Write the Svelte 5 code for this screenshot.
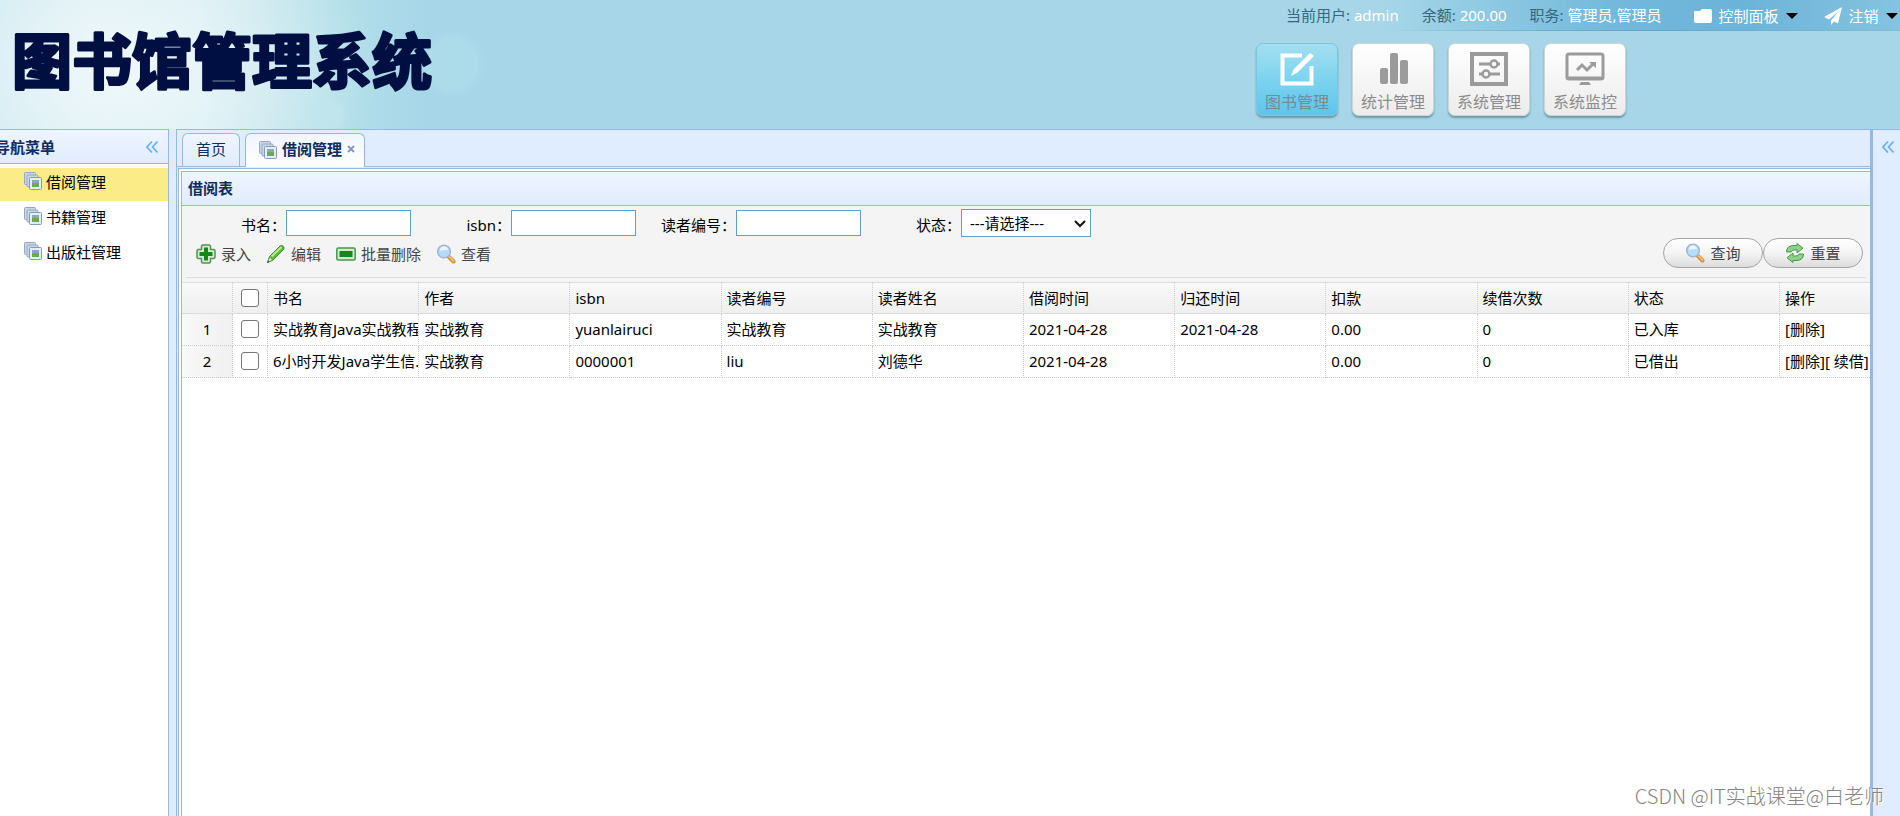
<script>
  const modules = [
    { label: '图书管理', icon: 'edit', active: true },
    { label: '统计管理', icon: 'bars' },
    { label: '系统管理', icon: 'sliders' },
    { label: '系统监控', icon: 'monitor' }
  ];
  const menu = ['借阅管理', '书籍管理', '出版社管理'];
  const actions = [
    { label: '录入', icon: 'add' },
    { label: '编辑', icon: 'pencil' },
    { label: '批量删除', icon: 'remove' },
    { label: '查看', icon: 'search' }
  ];
  const columns = ['书名', '作者', 'isbn', '读者编号', '读者姓名', '借阅时间', '归还时间', '扣款', '续借次数', '状态', '操作'];
  const rows = [
    ['实战教育Java实战教程', '实战教育', 'yuanlairuci', '实战教育', '实战教育', '2021-04-28', '2021-04-28', '0.00', '0', '已入库'],
    ['6小时开发Java学生信..', '实战教育', '0000001', 'liu', '刘德华', '2021-04-28', '', '0.00', '0', '已借出']
  ];
  const operations = [['[删除]'], ['[删除]', '[ 续借]']];
</script>

{#snippet pages()}
  <svg class="pages" viewBox="0 0 18 18" width="18" height="18" aria-hidden="true">
    <rect x="0.5" y="0.5" width="11" height="12" rx="1" fill="#c9d7e4" stroke="#93a9c0" />
    <rect x="3" y="3" width="11" height="12" rx="1" fill="#c9d7e4" stroke="#93a9c0" />
    <rect x="5.500" y="5.500" width="12" height="12" rx="1" fill="#e6eef5" stroke="#839bb4" />
    <rect x="8" y="8" width="7" height="7" fill="#6cab45" />
    <path d="M8 8h7v3H8z" fill="#87a9b8" />
  </svg>
{/snippet}

{#snippet glyph(name)}
  <svg viewBox="0 0 20 20" width="20" height="20" aria-hidden="true">
    {#if name === 'add'}
      <path d="M6.500 1h7l1 1v3.500H18l1 1v7l-1 1h-3.500V18l-1 1h-7l-1-1v-3.500H2l-1-1v-7l1-1h3.500V2z" fill="#d3ecd0" stroke="#4f9455" stroke-width="1.500" stroke-linejoin="round" />
      <path d="M8 3.500h4V8h4.500v4H12v4.500H8V12H3.500V8H8z" fill="#128a18" />
    {:else if name === 'pencil'}
      <path d="M1.500 18.500l2-6L14 2q1.800-1.200 3.200.2t.6 3L7.200 16z" fill="#5fb83c" stroke="#3c8d2c" />
      <path d="M5.500 12.500L15.500 3" stroke="#b6eb94" stroke-width="2" />
      <path d="M1.500 18.500l2-5.500 3.200 3z" fill="#d9e6c8" stroke="#669452" stroke-width=".8" />
      <path d="M1 19l1-2.500 1.500 1.500z" fill="#2c6322" />
    {:else if name === 'remove'}
      <rect x=".8" y="4" width="18.400" height="12" rx="1.500" fill="#d0ecd0" stroke="#4c9350" stroke-width="1.500" />
      <rect x="3.500" y="7" width="13" height="6" fill="#0d8a1c" />
    {:else if name === 'search'}
      <path d="M12.500 12.500l5 5" stroke="#d38b36" stroke-width="4" stroke-linecap="round" />
      <path d="M12.500 12l5 5" stroke="#f4bd6f" stroke-width="2" stroke-linecap="round" />
      <circle cx="8" cy="7.500" r="6.300" fill="#b7dcfb" stroke="#a3b6cf" stroke-width="1.600" />
      <path d="M4 7a4 4 0 0 1 8-1q-4-.5-8 1" fill="#e8f6ff" />
    {:else}
      <path d="M1.500 9q0-6.500 7.500-6.500h3V.5L18 5.200 12 10V7H9.500Q6.500 7 6 9z" fill="#8dd08a" stroke="#449a4a" />
      <path d="M18.500 11q0 6.500-7.500 6.500H8v2l-6-4.700L8 10v3h2.500q3 0 3.500-2z" fill="#8dd08a" stroke="#449a4a" />
    {/if}
  </svg>
{/snippet}

{#snippet chevrons()}
  <svg viewBox="0 0 12 12" width="12" height="12" aria-hidden="true">
    <path d="M6 .5L1 6l5 5.500M11.500 .5l-5 5.500 5 5.500" fill="none" stroke="#6bb1ee" stroke-width="1.700" />
  </svg>
{/snippet}

<div class="page">
  <header>
    <h1>
      <svg width="440" height="110" viewBox="0 0 440 110">
        <text x="12" y="84">图书馆管理系统</text>
      </svg>
    </h1>
    <div class="right">
      <div class="userbar">
        <span class="info">当前用户: <b>admin</b></span>
        <span class="info">余额: <b>200.00</b></span>
        <span class="info">职务: <b>管理员,管理员</b></span>
        <button class="link">
          <svg viewBox="0 0 18 16" width="18" height="16" aria-hidden="true"><path d="M0 4q0-1 1-1h5l2-2h8q2 0 2 2v10q0 2-2 2H2q-2 0-2-2z" fill="#fff" /></svg>
          控制面板
          <i class="caret"></i>
        </button>
        <button class="link">
          <svg viewBox="0 0 18 18" width="18" height="18" aria-hidden="true"><path d="M18 0L0 10l5 2.500L15 4 7 13.500V18l3-3.500 4 2z" fill="#fff" /></svg>
          注销
          <i class="caret"></i>
        </button>
      </div>
      <nav class="modules">
        {#each modules as m}
          <button class="module" class:active={m.active}>
            <svg viewBox="0 0 40 36" width="40" height="36" aria-hidden="true">
              {#if m.icon === 'edit'}
                <path d="M25 3.500H5.500v28h29V14" fill="none" stroke="#fff" stroke-width="4" />
                <path d="M14 24l2.500-6.500L33 1l4 3-16.500 16.500z" fill="#fff" />
              {:else if m.icon === 'bars'}
                <g fill="#9b9b9b"><rect x="7" y="16" width="8" height="16" rx="2" /><rect x="17" y="1" width="8" height="31" rx="2" /><rect x="27" y="8" width="8" height="24" rx="2" /></g>
              {:else if m.icon === 'sliders'}
                <g fill="none" stroke="#9b9b9b"><rect x="3" y="2" width="34" height="30" stroke-width="4" /><path d="M10 12h12M28 12h3M10 22h3M20 22h11" stroke-width="3" /><circle cx="25" cy="12" r="3.500" stroke-width="2.500" /><circle cx="17" cy="22" r="3.500" stroke-width="2.500" /></g>
              {:else}
                <rect x="2" y="2" width="36" height="25" rx="2" fill="none" stroke="#9b9b9b" stroke-width="3" />
                <path d="M2 26h36M12 18l5-5 5 5 6-6" fill="none" stroke="#9b9b9b" stroke-width="3" />
                <path d="M24 10h7v6zM16 30h8l2 3H14z" fill="#9b9b9b" />
              {/if}
            </svg>
            {m.label}
          </button>
        {/each}
      </nav>
    </div>
  </header>

  <div class="body">
    <aside>
      <div class="head">
        <span>导航菜单</span>
        <button class="plain" aria-label="收起菜单">{@render chevrons()}</button>
      </div>
      <ul>
        {#each menu as item, i}
          <li class:selected={i === 0}><a href="#{i}">{@render pages()}{item}</a></li>
        {/each}
      </ul>
    </aside>

    <main>
      <div class="tabs">
        <button class="tab">首页</button>
        <div class="tab on">
          {@render pages()}
          <span>借阅管理</span>
          <button class="plain" aria-label="关闭">
            <svg viewBox="0 0 8 8" width="8" height="8" aria-hidden="true"><path d="M1 1l6 6M7 1L1 7" stroke="#8597bd" stroke-width="1.800" /></svg>
          </button>
        </div>
      </div>
      <div class="frame">
        <section>
          <h2>借阅表</h2>
          <div class="tools">
            <form class="filters" onsubmit={(e) => e.preventDefault()}>
              <label for="f-name">书名：</label><input id="f-name" />
              <label for="f-isbn">isbn：</label><input id="f-isbn" />
              <label for="f-reader">读者编号：</label><input id="f-reader" />
              <label for="f-state">状态：</label>
              <div class="select">
                <select id="f-state"><option>---请选择---</option></select>
                <svg viewBox="0 0 12 8" width="12" height="8" aria-hidden="true"><path d="M1 1l5 5 5-5" fill="none" stroke="#111" stroke-width="2" /></svg>
              </div>
            </form>
            <div class="actions">
              {#each actions as a}
                <button class="plain">{@render glyph(a.icon)}{a.label}</button>
              {/each}
              <div class="pills">
                <button class="pill">{@render glyph('search')}查询</button>
                <button class="pill">{@render glyph('refresh')}重置</button>
              </div>
            </div>
          </div>
          <table>
            <colgroup>
              <col class="c-num" /><col class="c-check" />
              {#each columns as c, i}<col class:c-last={i === columns.length - 1} />{/each}
            </colgroup>
            <thead>
              <tr>
                <th class="num"></th>
                <th class="check"><input type="checkbox" aria-label="全选" /></th>
                {#each columns as c}<th>{c}</th>{/each}
              </tr>
            </thead>
            <tbody>
              {#each rows as row, r}
                <tr>
                  <td class="num">{r + 1}</td>
                  <td class="check"><input type="checkbox" aria-label="选择第{r + 1}行" /></td>
                  {#each row as cell}<td>{cell}</td>{/each}
                  <td>{#each operations[r] as op}<a href="#op">{op}</a>{/each}</td>
                </tr>
              {/each}
            </tbody>
          </table>
        </section>
      </div>
    </main>

    <div class="east">
      <button class="plain" aria-label="展开面板">{@render chevrons()}</button>
    </div>
  </div>
  <div class="watermark">CSDN @IT实战课堂@白老师</div>
</div>

<style>
  :global(body) { margin: 0; }
  .page, .page * { box-sizing: border-box; }
  .page {
    position: relative;
    display: flex;
    flex-direction: column;
    min-height: 100vh;
    overflow: hidden;
    font: 15px/20px "Noto Sans", "Noto Sans CJK SC", sans-serif;
    color: #000;
    background: #e0ecff;
  }
  button, input, select { font: inherit; color: inherit; margin: 0; }
  button { cursor: pointer; }
  a { color: inherit; text-decoration: none; }
  .plain { display: flex; align-items: center; padding: 0; border: 0; background: none; }

  header {
    display: flex;
    justify-content: space-between;
    height: 129px;
    background:
      radial-gradient(circle 34px at 452px 64px, #b0dfeb99 0 75%, transparent),
      radial-gradient(circle 20px at 328px 116px, #c2e6ee99 0 75%, transparent),
      radial-gradient(ellipse 260px 170px at 120px 70px, #eef8fa 0, #eef8fa66 50%, transparent),
      linear-gradient(90deg, #cfe9f2 0, #deeff5 90px, #d9eef4 200px, #c3e5ec 280px, #b3dfe9 340px, #a6d6e8 430px);
  }
  h1 { margin: 0; height: 110px; }
  h1 text {
    font: 700 60px "Noto Sans CJK SC", sans-serif;
    fill: #000f42;
    stroke: #000f42;
    stroke-width: 3px;
    stroke-linejoin: round;
  }
  .right { width: 644px; flex: none; }
  .userbar {
    display: flex;
    align-items: center;
    height: 31px;
    padding-left: 30px;
    white-space: nowrap;
    color: #35687f;
    background: linear-gradient(90deg, transparent 20%, #74b9dc 55%, #6cb3d9 75%, #85c3df);
    border-bottom: 1px solid transparent;
    border-image: linear-gradient(90deg, transparent 20%, #62a5c8 60%, #80bcd6) 1;
  }
  .info { margin-right: 23px; padding-bottom: 1px; }
  .info b { font-weight: 400; color: #fff; }
  .link { display: flex; align-items: center; gap: 7px; margin: 2px 18px 0 9px; padding: 0; border: 0; background: none; color: #fff; }
  .link + .link { margin: 2px 0 0 8px; }
  .caret { border: 6px solid transparent; border-top-color: #000; border-bottom: 0; }
  .modules { display: flex; gap: 14px; padding-top: 12px; }
  .module {
    display: flex;
    flex-direction: column;
    align-items: center;
    gap: 4px;
    width: 82px;
    height: 73px;
    padding: 8px 0 0;
    border: 1px solid #cdd5d8;
    border-radius: 7px;
    background: linear-gradient(#fff, #ececec);
    box-shadow: 0 2px 2px #6f96a5;
    font-size: 16px;
    color: #8b8b8b;
  }
  .module.active { background: linear-gradient(#a3dff0, #7dd3ef 50%, #5fc4ea); border-color: #7ac6df; color: #718d98; }

  .body { display: flex; flex: 1; }
  aside { width: 169px; flex: none; border: 1px solid #95b8e7; border-width: 1px 1px 0 0; background: #fff; }
  .head {
    display: flex;
    align-items: center;
    justify-content: space-between;
    height: 34px;
    padding-right: 10px;
    border-bottom: 1px solid #95b8e7;
    background: linear-gradient(#eff5ff, #e0ecff);
    font-weight: 700;
    color: #0e2d5f;
  }
  .head span { margin-left: -5px; }
  ul { list-style: none; margin: 0; padding: 4px 0 0; }
  li { height: 33px; margin-bottom: 2px; }
  li.selected { background: #fbec88; }
  li a { display: flex; align-items: center; gap: 4px; height: 28px; padding-left: 24px; }
  .pages { flex: none; margin-bottom: 2px; }

  main { display: flex; flex-direction: column; flex: 1; min-width: 0; margin-left: 7px; border-left: 1px solid #95b8e7; border-top: 1px solid #95b8e7; }
  .tabs { display: flex; gap: 5px; height: 37px; padding: 3px 0 0 5px; border-bottom: 1px solid #95b8e7; background: #e0ecff; }
  .tab {
    display: flex;
    align-items: center;
    justify-content: center;
    gap: 4px;
    height: 33px;
    padding: 0 13px 2px;
    border: 1px solid #95b8e7;
    border-bottom: 0;
    border-radius: 6px 6px 0 0;
    background: linear-gradient(#eff5ff, #e0ecff);
    color: #0e2d5f;
  }
  .tab.on { height: 34px; padding: 0 9px 4px 13px; gap: 5px; background: linear-gradient(#eff5ff, #fff); font-weight: 700; }
  .tab .pages { margin: 3px 0 0; }
  .frame { display: flex; flex: 1; margin: 1px 0 0 1px; padding: 2px 0 0 2px; border: 1px solid #95b8e7; border-width: 1px 0 0 1px; background: #fff; }
  section { flex: 1; min-width: 0; border: 1px solid #95b8e7; border-width: 1px 0 0 1px; }
  h2 { margin: 0; height: 34px; padding: 6px; border-bottom: 1px solid #95b8e7; font-size: 15px; line-height: 20px; color: #0e2d5f; background: linear-gradient(#eff5ff, #e0ecff); }
  .tools { height: 76px; padding: 2px 4px 0; background: #f4f4f4; }
  .filters { display: flex; align-items: center; height: 30px; }
  .filters label { width: 100px; padding-top: 4px; text-align: right; }
  .filters input { width: 125px; height: 26px; padding: 0 4px; border: 1px solid #5fa1c0; background: #fff; }
  .select { position: relative; }
  .select select { appearance: none; width: 130px; height: 28px; padding: 0 8px; border: 1px solid #5fa1c0; border-radius: 0; background: #fff; }
  .select svg { position: absolute; right: 5px; top: 11px; pointer-events: none; }
  .actions { display: flex; gap: 15px; height: 40px; padding-left: 10px; border-bottom: 1px solid #ddd; color: #444; }
  .actions > button { gap: 5px; height: 32px; }
  .pills { display: flex; margin-left: auto; padding-right: 3px; }
  .pill {
    display: flex;
    align-items: center;
    justify-content: center;
    gap: 5px;
    width: 100px;
    height: 30px;
    padding: 0;
    border: 1px solid #a4a4a4;
    border-radius: 15px;
    background: linear-gradient(#fff, #f4f4f4 50%, #dcdcdc);
  }

  table { width: 100%; table-layout: fixed; border-collapse: separate; border-spacing: 0; }
  .c-num { width: 51px; }
  .c-check { width: 35px; }
  .c-last { width: 90px; }
  th, td {
    height: 32px;
    padding: 0 5px;
    overflow: hidden;
    white-space: nowrap;
    text-align: left;
    font-weight: 400;
    border-right: 1px dotted #ccc;
    border-bottom: 1px dotted #ccc;
  }
  td { padding-bottom: 2px; }
  th { border-top: 1px solid #ddd; border-bottom: 1px solid #ddd; background: linear-gradient(#f9f9f9, #efefef); }
  th:last-child, td:last-child { border-right: 0; }
  td.num { text-align: center; background: linear-gradient(90deg, #f9f9f9, #f0f0f0); }
  th.check, td.check { padding-left: 8px; padding-right: 8px; }
  .check input {
    display: block;
    appearance: none;
    width: 18px;
    height: 18px;
    border: 1px solid #767676;
    border-radius: 3px;
    background: #fff;
  }
  .check input:checked { background: #0075ff; }

  .east { width: 30px; flex: none; padding: 11px 0 0 9px; border-left: 3px solid #95b8e7; border-top: 1px solid #95b8e7; background: #e0ecff; }
  .watermark {
    position: absolute;
    right: 16px;
    bottom: 5px;
    font: 300 20px/30px "Noto Sans CJK SC", sans-serif;
    color: #858585;
    text-shadow: 1px 1px 0 #fff;
    pointer-events: none;
  }
</style>
